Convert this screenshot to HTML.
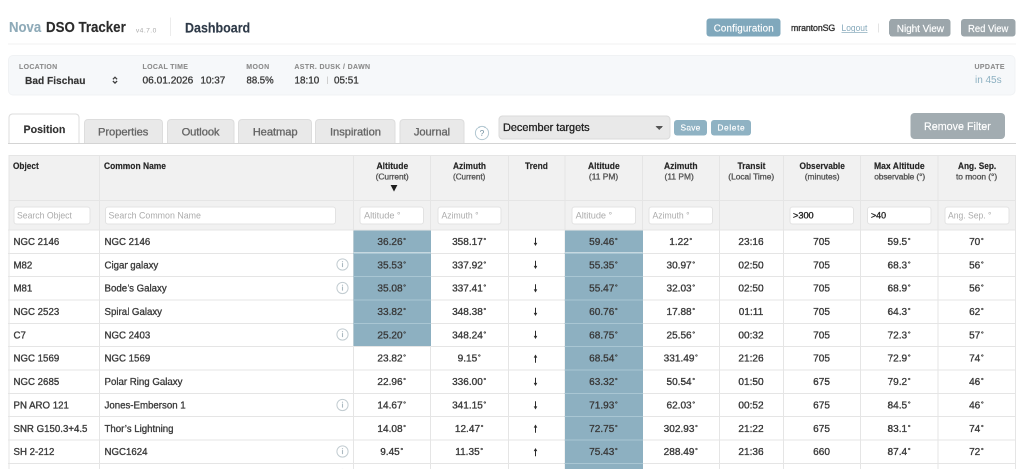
<!DOCTYPE html>
<html><head><meta charset="utf-8">
<style>
*{box-sizing:border-box;margin:0;padding:0}
html,body{width:1024px;height:469px;overflow:hidden;background:#fff;font-family:"Liberation Sans",sans-serif;color:#333}
.abs{position:absolute}
.t{position:absolute;white-space:nowrap;line-height:1}
</style></head><body>

<div style="position:absolute;left:0;top:0;width:2048px;height:938px;transform:scale(0.5);transform-origin:0 0;will-change:transform;background:#fff;overflow:hidden"><div style="position:absolute;left:0;top:0;width:1024px;height:469px;zoom:2">
<div class="t" style="left:8.75px;top:19.50px;font-size:14.66px;font-weight:bold;color:#8eaab8;transform:scaleX(0.8971);transform-origin:0.00px 0;-webkit-text-stroke:0.1px currentColor;">Nova</div>
<div class="t" style="left:46.00px;top:19.50px;font-size:14.66px;font-weight:bold;color:#2b2b2b;transform:scaleX(0.9062);transform-origin:0.00px 0;-webkit-text-stroke:0.15px currentColor;">DSO Tracker</div>
<div class="t" style="left:135.90px;top:27.00px;font-size:6.70px;color:#aaaaaa;letter-spacing:0.430px;">v4.7.0</div>
<div class="abs" style="left:170.00px;top:17.60px;width:1.00px;height:18.40px;background:#ececec"></div>
<div class="t" style="left:185.00px;top:21.00px;font-size:13.69px;font-weight:bold;color:#2e3a48;transform:scaleX(0.9116);transform-origin:0.00px 0;-webkit-text-stroke:0.15px currentColor;">Dashboard</div>
<div class="abs" style="left:8.00px;top:43.50px;width:1008.00px;height:1.00px;background:#f1f1f1"></div>
<div class="abs" style="left:706.70px;top:18.50px;width:73.80px;height:18.10px;background:#80a8bc;border-radius:3px"></div>
<div class="t" style="left:713.70px;top:23.50px;font-size:9.78px;color:#ffffff;letter-spacing:0.150px;-webkit-text-stroke:0.15px currentColor;">Configuration</div>
<div class="t" style="left:791.00px;top:24.00px;font-size:8.80px;color:#333;letter-spacing:-0.094px;-webkit-text-stroke:0.33px currentColor;">mrantonSG</div>
<div class="t" style="left:841.50px;top:23.50px;font-size:9.08px;color:#86a9bb;transform:scaleX(0.9314);transform-origin:0.00px 0;">Logout</div>
<div class="abs" style="left:841.50px;top:32.20px;width:25.80px;height:0.70px;background:#a9c2ce"></div>
<div class="abs" style="left:877.80px;top:23.30px;width:1.00px;height:9.00px;background:#e4e4e4"></div>
<div class="abs" style="left:889.10px;top:18.80px;width:61.40px;height:17.60px;background:#9ca6ab;border-radius:3px"></div>
<div class="t" style="left:896.80px;top:23.50px;font-size:10.06px;color:#ffffff;letter-spacing:-0.078px;-webkit-text-stroke:0.15px currentColor;">Night View</div>
<div class="abs" style="left:961.00px;top:18.80px;width:54.60px;height:17.60px;background:#9ca6ab;border-radius:3px"></div>
<div class="t" style="left:968.00px;top:23.50px;font-size:10.06px;color:#ffffff;transform:scaleX(0.9405);transform-origin:0.00px 0;-webkit-text-stroke:0.15px currentColor;">Red View</div>
<div class="abs" style="left:8.10px;top:55.00px;width:1007.40px;height:40.30px;background:#f6f8fa;border:1px solid #f0f2f4;border-radius:5px"></div>
<div class="t" style="left:19.00px;top:63.50px;font-size:6.98px;font-weight:bold;color:#8c8c8c;letter-spacing:0.314px;-webkit-text-stroke:0.1px currentColor;">LOCATION</div>
<div class="t" style="left:25.00px;top:75.50px;font-size:10.34px;font-weight:bold;color:#333;transform:scaleX(0.9829);transform-origin:0.00px 0;-webkit-text-stroke:0.15px currentColor;">Bad Fischau</div>
<svg class="abs" style="left:110px;top:74px" width="10" height="12" viewBox="0 0 10 12"><path d="M2.9 5.3 L5 3.2 L7.1 5.3 M2.9 7 L5 9.1 L7.1 7" fill="none" stroke="#3a3a3a" stroke-width="1.25"/></svg>
<div class="t" style="left:142.50px;top:63.50px;font-size:6.98px;font-weight:bold;color:#8c8c8c;letter-spacing:0.317px;-webkit-text-stroke:0.1px currentColor;">LOCAL TIME</div>
<div class="t" style="left:142.50px;top:75.00px;font-size:10.34px;color:#3a3a3a;transform:scaleX(0.9816);transform-origin:0.00px 0;-webkit-text-stroke:0.33px currentColor;">06.01.2026</div>
<div class="t" style="left:200.60px;top:75.00px;font-size:10.34px;color:#3a3a3a;transform:scaleX(0.9553);transform-origin:0.00px 0;-webkit-text-stroke:0.33px currentColor;">10:37</div>
<div class="t" style="left:246.30px;top:63.50px;font-size:6.98px;font-weight:bold;color:#8c8c8c;letter-spacing:0.367px;-webkit-text-stroke:0.1px currentColor;">MOON</div>
<div class="t" style="left:246.30px;top:75.00px;font-size:10.34px;color:#3a3a3a;transform:scaleX(0.9247);transform-origin:0.00px 0;-webkit-text-stroke:0.33px currentColor;">88.5%</div>
<div class="t" style="left:294.40px;top:63.50px;font-size:6.98px;font-weight:bold;color:#8c8c8c;letter-spacing:0.369px;-webkit-text-stroke:0.1px currentColor;">ASTR. DUSK / DAWN</div>
<div class="t" style="left:294.40px;top:75.00px;font-size:10.34px;color:#3a3a3a;transform:scaleX(0.9553);transform-origin:0.00px 0;-webkit-text-stroke:0.33px currentColor;">18:10</div>
<div class="abs" style="left:326.80px;top:76.50px;width:1.00px;height:7.50px;background:#cfcfcf"></div>
<div class="t" style="left:334.20px;top:75.00px;font-size:10.34px;color:#3a3a3a;transform:scaleX(0.9553);transform-origin:0.00px 0;-webkit-text-stroke:0.33px currentColor;">05:51</div>
<div class="t" style="left:974.50px;top:63.50px;font-size:6.98px;font-weight:bold;color:#8c8c8c;letter-spacing:0.370px;-webkit-text-stroke:0.1px currentColor;">UPDATE</div>
<div class="t" style="left:975.00px;top:74.50px;font-size:10.06px;color:#8cb0c1;letter-spacing:-0.040px;">in 45s</div>
<div class="abs" style="left:83.90px;top:119.10px;width:78.90px;height:23.90px;background:#e9e9e9;border:1px solid #dddddd;border-bottom:none;border-radius:4px 4px 0 0"></div>
<div class="t" style="left:98.00px;top:126.50px;font-size:11.17px;color:#666;letter-spacing:-0.056px;-webkit-text-stroke:0.33px currentColor;">Properties</div>
<div class="abs" style="left:167.00px;top:119.10px;width:67.40px;height:23.90px;background:#e9e9e9;border:1px solid #dddddd;border-bottom:none;border-radius:4px 4px 0 0"></div>
<div class="t" style="left:181.60px;top:126.50px;font-size:11.17px;color:#666;letter-spacing:-0.092px;-webkit-text-stroke:0.33px currentColor;">Outlook</div>
<div class="abs" style="left:238.00px;top:119.10px;width:74.00px;height:23.90px;background:#e9e9e9;border:1px solid #dddddd;border-bottom:none;border-radius:4px 4px 0 0"></div>
<div class="t" style="left:252.70px;top:126.50px;font-size:11.17px;color:#666;letter-spacing:-0.075px;-webkit-text-stroke:0.33px currentColor;">Heatmap</div>
<div class="abs" style="left:315.20px;top:119.10px;width:80.50px;height:23.90px;background:#e9e9e9;border:1px solid #dddddd;border-bottom:none;border-radius:4px 4px 0 0"></div>
<div class="t" style="left:330.00px;top:126.50px;font-size:11.17px;color:#666;letter-spacing:-0.055px;-webkit-text-stroke:0.33px currentColor;">Inspiration</div>
<div class="abs" style="left:399.40px;top:119.10px;width:65.10px;height:23.90px;background:#e9e9e9;border:1px solid #dddddd;border-bottom:none;border-radius:4px 4px 0 0"></div>
<div class="t" style="left:413.90px;top:126.50px;font-size:11.17px;color:#666;letter-spacing:-0.075px;-webkit-text-stroke:0.33px currentColor;">Journal</div>
<div class="abs" style="left:8.30px;top:113.30px;width:71.10px;height:30.70px;background:#fff;border:1px solid #dcdcdc;border-bottom:none;border-radius:4px 4px 0 0"></div>
<div class="t" style="left:23.30px;top:124.00px;font-size:10.89px;font-weight:bold;color:#333;transform:scaleX(0.9766);transform-origin:0.00px 0;-webkit-text-stroke:0.15px currentColor;">Position</div>
<div class="abs" style="left:8.00px;top:143.20px;width:1008.00px;height:1.00px;background:#d4d4d4"></div>
<svg class="abs" style="left:474px;top:125px" width="16" height="16" viewBox="0 0 16 16"><circle cx="8" cy="8" r="6.6" fill="none" stroke="#b2c7d1" stroke-width="1"/><text x="8" y="10.9" text-anchor="middle" font-size="8.4" font-family="Liberation Sans" fill="#6f8e9e">?</text></svg>
<div class="abs" style="left:498.70px;top:115.60px;width:172.00px;height:23.70px;background:#e9e9e9;border:1px solid #dadada;border-radius:4px"></div>
<div class="t" style="left:503.20px;top:122.00px;font-size:11.17px;color:#222;transform:scaleX(0.9763);transform-origin:0.00px 0;-webkit-text-stroke:0.33px currentColor;">December targets</div>
<svg class="abs" style="left:655px;top:125px" width="9" height="6" viewBox="0 0 9 6"><path d="M0.5 1 L8 1 L4.25 5 Z" fill="#555"/></svg>
<div class="abs" style="left:673.90px;top:120.00px;width:33.00px;height:15.60px;background:#8fb2c3;border-radius:3px"></div>
<div class="t" style="left:680.50px;top:124.00px;font-size:8.38px;color:#fff;letter-spacing:0.250px;-webkit-text-stroke:0.15px currentColor;">Save</div>
<div class="abs" style="left:710.80px;top:120.00px;width:40.40px;height:15.60px;background:#8fb2c3;border-radius:3px"></div>
<div class="t" style="left:717.40px;top:124.00px;font-size:8.38px;color:#fff;letter-spacing:0.610px;-webkit-text-stroke:0.15px currentColor;">Delete</div>
<div class="abs" style="left:910.30px;top:113.10px;width:94.60px;height:25.90px;background:#a2acb1;border-radius:4px"></div>
<div class="t" style="left:924.00px;top:121.00px;font-size:11.31px;color:#fff;transform:scaleX(0.9495);transform-origin:0.00px 0;-webkit-text-stroke:0.15px currentColor;">Remove Filter</div>
<div class="abs" style="left:8.30px;top:154.90px;width:1007.60px;height:74.50px;background:#f1f1f1"></div>
<div class="abs" style="left:8.30px;top:154.90px;width:1007.60px;height:1.00px;background:#e5e5e5"></div>
<div class="abs" style="left:8.30px;top:200.00px;width:1007.60px;height:1.00px;background:#e5e5e5"></div>
<div class="abs" style="left:8.00px;top:229.40px;width:1008.00px;height:1.00px;background:#e5e5e5"></div>
<div class="abs" style="left:8.00px;top:252.75px;width:1008.00px;height:1.00px;background:#e5e5e5"></div>
<div class="abs" style="left:8.00px;top:276.10px;width:1008.00px;height:1.00px;background:#e5e5e5"></div>
<div class="abs" style="left:8.00px;top:299.45px;width:1008.00px;height:1.00px;background:#e5e5e5"></div>
<div class="abs" style="left:8.00px;top:322.80px;width:1008.00px;height:1.00px;background:#e5e5e5"></div>
<div class="abs" style="left:8.00px;top:346.15px;width:1008.00px;height:1.00px;background:#e5e5e5"></div>
<div class="abs" style="left:8.00px;top:369.50px;width:1008.00px;height:1.00px;background:#e5e5e5"></div>
<div class="abs" style="left:8.00px;top:392.85px;width:1008.00px;height:1.00px;background:#e5e5e5"></div>
<div class="abs" style="left:8.00px;top:416.20px;width:1008.00px;height:1.00px;background:#e5e5e5"></div>
<div class="abs" style="left:8.00px;top:439.55px;width:1008.00px;height:1.00px;background:#e5e5e5"></div>
<div class="abs" style="left:8.00px;top:462.90px;width:1008.00px;height:1.00px;background:#e5e5e5"></div>
<div class="abs" style="left:8.30px;top:154.90px;width:1.00px;height:314.10px;background:#e5e5e5"></div>
<div class="abs" style="left:99.20px;top:154.90px;width:1.00px;height:314.10px;background:#e5e5e5"></div>
<div class="abs" style="left:352.90px;top:154.90px;width:1.00px;height:314.10px;background:#e5e5e5"></div>
<div class="abs" style="left:430.20px;top:154.90px;width:1.00px;height:314.10px;background:#e5e5e5"></div>
<div class="abs" style="left:507.80px;top:154.90px;width:1.00px;height:314.10px;background:#e5e5e5"></div>
<div class="abs" style="left:564.50px;top:154.90px;width:1.00px;height:314.10px;background:#e5e5e5"></div>
<div class="abs" style="left:642.10px;top:154.90px;width:1.00px;height:314.10px;background:#e5e5e5"></div>
<div class="abs" style="left:719.10px;top:154.90px;width:1.00px;height:314.10px;background:#e5e5e5"></div>
<div class="abs" style="left:782.90px;top:154.90px;width:1.00px;height:314.10px;background:#e5e5e5"></div>
<div class="abs" style="left:860.20px;top:154.90px;width:1.00px;height:314.10px;background:#e5e5e5"></div>
<div class="abs" style="left:937.60px;top:154.90px;width:1.00px;height:314.10px;background:#e5e5e5"></div>
<div class="abs" style="left:1014.90px;top:154.90px;width:1.00px;height:314.10px;background:#e5e5e5"></div>
<div class="abs" style="left:353.40px;top:230.40px;width:77.80px;height:22.35px;background:#8db0c1"></div>
<div class="abs" style="left:565.00px;top:230.40px;width:78.10px;height:22.35px;background:#8db0c1"></div>
<div class="abs" style="left:353.40px;top:253.75px;width:77.80px;height:22.35px;background:#8db0c1"></div>
<div class="abs" style="left:352.90px;top:252.75px;width:78.30px;height:1.00px;background:#a9c6d3"></div>
<div class="abs" style="left:565.00px;top:253.75px;width:78.10px;height:22.35px;background:#8db0c1"></div>
<div class="abs" style="left:564.50px;top:252.75px;width:78.60px;height:1.00px;background:#a9c6d3"></div>
<div class="abs" style="left:353.40px;top:277.10px;width:77.80px;height:22.35px;background:#8db0c1"></div>
<div class="abs" style="left:352.90px;top:276.10px;width:78.30px;height:1.00px;background:#a9c6d3"></div>
<div class="abs" style="left:565.00px;top:277.10px;width:78.10px;height:22.35px;background:#8db0c1"></div>
<div class="abs" style="left:564.50px;top:276.10px;width:78.60px;height:1.00px;background:#a9c6d3"></div>
<div class="abs" style="left:353.40px;top:300.45px;width:77.80px;height:22.35px;background:#8db0c1"></div>
<div class="abs" style="left:352.90px;top:299.45px;width:78.30px;height:1.00px;background:#a9c6d3"></div>
<div class="abs" style="left:565.00px;top:300.45px;width:78.10px;height:22.35px;background:#8db0c1"></div>
<div class="abs" style="left:564.50px;top:299.45px;width:78.60px;height:1.00px;background:#a9c6d3"></div>
<div class="abs" style="left:353.40px;top:323.80px;width:77.80px;height:22.35px;background:#8db0c1"></div>
<div class="abs" style="left:352.90px;top:322.80px;width:78.30px;height:1.00px;background:#a9c6d3"></div>
<div class="abs" style="left:565.00px;top:323.80px;width:78.10px;height:22.35px;background:#8db0c1"></div>
<div class="abs" style="left:564.50px;top:322.80px;width:78.60px;height:1.00px;background:#a9c6d3"></div>
<div class="abs" style="left:565.00px;top:347.15px;width:78.10px;height:22.35px;background:#8db0c1"></div>
<div class="abs" style="left:564.50px;top:346.15px;width:78.60px;height:1.00px;background:#a9c6d3"></div>
<div class="abs" style="left:565.00px;top:370.50px;width:78.10px;height:22.35px;background:#8db0c1"></div>
<div class="abs" style="left:564.50px;top:369.50px;width:78.60px;height:1.00px;background:#a9c6d3"></div>
<div class="abs" style="left:565.00px;top:393.85px;width:78.10px;height:22.35px;background:#8db0c1"></div>
<div class="abs" style="left:564.50px;top:392.85px;width:78.60px;height:1.00px;background:#a9c6d3"></div>
<div class="abs" style="left:565.00px;top:417.20px;width:78.10px;height:22.35px;background:#8db0c1"></div>
<div class="abs" style="left:564.50px;top:416.20px;width:78.60px;height:1.00px;background:#a9c6d3"></div>
<div class="abs" style="left:565.00px;top:440.55px;width:78.10px;height:22.35px;background:#8db0c1"></div>
<div class="abs" style="left:564.50px;top:439.55px;width:78.60px;height:1.00px;background:#a9c6d3"></div>
<div class="abs" style="left:565.00px;top:463.90px;width:78.10px;height:22.35px;background:#8db0c1"></div>
<div class="abs" style="left:564.50px;top:462.90px;width:78.60px;height:1.00px;background:#a9c6d3"></div>
<div class="t" style="left:13.00px;top:162.00px;font-size:8.80px;font-weight:bold;color:#262626;transform:scaleX(0.9394);transform-origin:0.00px 0;-webkit-text-stroke:0.15px currentColor;">Object</div>
<div class="t" style="left:104.20px;top:162.00px;font-size:8.80px;font-weight:bold;color:#262626;transform:scaleX(0.9611);transform-origin:0.00px 0;-webkit-text-stroke:0.15px currentColor;">Common Name</div>
<div class="t" style="left:376.30px;top:162.00px;font-size:8.80px;font-weight:bold;color:#262626;transform:scaleX(0.9677);transform-origin:0.00px 0;-webkit-text-stroke:0.15px currentColor;">Altitude</div>
<div class="t" style="left:375.60px;top:173.00px;font-size:8.38px;color:#555;letter-spacing:-0.050px;-webkit-text-stroke:0.33px currentColor;">(Current)</div>
<div class="t" style="left:453.00px;top:162.00px;font-size:8.80px;font-weight:bold;color:#262626;transform:scaleX(0.9507);transform-origin:0.00px 0;-webkit-text-stroke:0.15px currentColor;">Azimuth</div>
<div class="t" style="left:453.00px;top:173.00px;font-size:8.38px;color:#555;transform:scaleX(0.9641);transform-origin:0.00px 0;-webkit-text-stroke:0.33px currentColor;">(Current)</div>
<div class="t" style="left:525.20px;top:162.00px;font-size:8.80px;font-weight:bold;color:#262626;transform:scaleX(0.9538);transform-origin:0.00px 0;-webkit-text-stroke:0.15px currentColor;">Trend</div>
<div class="t" style="left:588.00px;top:162.00px;font-size:8.80px;font-weight:bold;color:#262626;transform:scaleX(0.9677);transform-origin:0.00px 0;-webkit-text-stroke:0.15px currentColor;">Altitude</div>
<div class="t" style="left:588.90px;top:173.00px;font-size:8.38px;color:#555;letter-spacing:0.025px;-webkit-text-stroke:0.33px currentColor;">(11 PM)</div>
<div class="t" style="left:664.00px;top:162.00px;font-size:8.80px;font-weight:bold;color:#262626;transform:scaleX(0.9681);transform-origin:0.00px 0;-webkit-text-stroke:0.15px currentColor;">Azimuth</div>
<div class="t" style="left:664.50px;top:173.00px;font-size:8.38px;color:#555;letter-spacing:0.025px;-webkit-text-stroke:0.33px currentColor;">(11 PM)</div>
<div class="t" style="left:737.40px;top:162.00px;font-size:8.80px;font-weight:bold;color:#262626;transform:scaleX(0.9686);transform-origin:0.00px 0;-webkit-text-stroke:0.15px currentColor;">Transit</div>
<div class="t" style="left:728.30px;top:173.00px;font-size:8.38px;color:#555;letter-spacing:-0.023px;-webkit-text-stroke:0.33px currentColor;">(Local Time)</div>
<div class="t" style="left:799.30px;top:162.00px;font-size:8.80px;font-weight:bold;color:#262626;transform:scaleX(0.9465);transform-origin:0.00px 0;-webkit-text-stroke:0.15px currentColor;">Observable</div>
<div class="t" style="left:804.70px;top:173.00px;font-size:8.38px;color:#555;-webkit-text-stroke:0.33px currentColor;">(minutes)</div>
<div class="t" style="left:874.20px;top:162.00px;font-size:8.80px;font-weight:bold;color:#262626;transform:scaleX(0.9749);transform-origin:0.00px 0;-webkit-text-stroke:0.15px currentColor;">Max Altitude</div>
<div class="t" style="left:874.20px;top:173.00px;font-size:8.38px;color:#555;letter-spacing:-0.096px;-webkit-text-stroke:0.33px currentColor;">observable (°)</div>
<div class="t" style="left:957.80px;top:162.00px;font-size:8.80px;font-weight:bold;color:#262626;transform:scaleX(0.9418);transform-origin:0.00px 0;-webkit-text-stroke:0.15px currentColor;">Ang. Sep.</div>
<div class="t" style="left:956.00px;top:173.00px;font-size:8.38px;color:#555;letter-spacing:-0.040px;-webkit-text-stroke:0.33px currentColor;">to moon (°)</div>
<svg class="abs" style="left:389px;top:184px" width="10" height="9" viewBox="0 0 10 9"><path d="M1.6 1 L8.4 1 L5 7.6 Z" fill="#1e1e1e"/></svg>
<div class="abs" style="left:13.60px;top:206.50px;width:77.00px;height:17.90px;background:#fff;border:1px solid #e2e2e2;border-radius:3px"></div>
<div class="t" style="left:17.20px;top:211.00px;font-size:9.22px;color:#ababab;transform:scaleX(0.9400);transform-origin:0.00px 0;">Search Object</div>
<div class="abs" style="left:104.80px;top:206.50px;width:231.30px;height:17.90px;background:#fff;border:1px solid #e2e2e2;border-radius:3px"></div>
<div class="t" style="left:108.40px;top:211.00px;font-size:9.22px;color:#ababab;transform:scaleX(0.9600);transform-origin:0.00px 0;">Search Common Name</div>
<div class="abs" style="left:359.70px;top:206.50px;width:64.50px;height:17.90px;background:#fff;border:1px solid #e2e2e2;border-radius:3px"></div>
<div class="t" style="left:364.00px;top:211.00px;font-size:9.22px;color:#ababab;letter-spacing:-0.044px;">Altitude °</div>
<div class="abs" style="left:437.50px;top:206.50px;width:64.00px;height:17.90px;background:#fff;border:1px solid #e2e2e2;border-radius:3px"></div>
<div class="t" style="left:441.50px;top:211.00px;font-size:9.22px;color:#ababab;transform:scaleX(0.9379);transform-origin:0.00px 0;">Azimuth °</div>
<div class="abs" style="left:571.60px;top:206.50px;width:64.20px;height:17.90px;background:#fff;border:1px solid #e2e2e2;border-radius:3px"></div>
<div class="t" style="left:575.60px;top:211.00px;font-size:9.22px;color:#ababab;letter-spacing:-0.044px;">Altitude °</div>
<div class="abs" style="left:648.50px;top:206.50px;width:64.70px;height:17.90px;background:#fff;border:1px solid #e2e2e2;border-radius:3px"></div>
<div class="t" style="left:652.50px;top:211.00px;font-size:9.22px;color:#ababab;transform:scaleX(0.9379);transform-origin:0.00px 0;">Azimuth °</div>
<div class="abs" style="left:789.60px;top:206.50px;width:64.40px;height:17.90px;background:#fff;border:1px solid #e2e2e2;border-radius:3px"></div>
<div class="t" style="left:793.00px;top:211.00px;font-size:9.22px;color:#1f1f1f;letter-spacing:-0.033px;-webkit-text-stroke:0.33px currentColor;">>300</div>
<div class="abs" style="left:867.00px;top:206.50px;width:64.40px;height:17.90px;background:#fff;border:1px solid #e2e2e2;border-radius:3px"></div>
<div class="t" style="left:870.80px;top:211.00px;font-size:9.22px;color:#1f1f1f;transform:scaleX(0.9615);transform-origin:0.00px 0;-webkit-text-stroke:0.33px currentColor;">>40</div>
<div class="abs" style="left:944.30px;top:206.50px;width:65.20px;height:17.90px;background:#fff;border:1px solid #e2e2e2;border-radius:3px"></div>
<div class="t" style="left:948.00px;top:211.00px;font-size:9.22px;color:#ababab;transform:scaleX(0.9303);transform-origin:0.00px 0;">Ang. Sep. °</div>
<div class="t" style="left:13.50px;top:236.50px;font-size:10.06px;color:#3a3a3a;transform:scaleX(0.9620);transform-origin:0.00px 0;-webkit-text-stroke:0.33px currentColor;">NGC 2146</div>
<div class="t" style="left:104.40px;top:236.50px;font-size:10.06px;color:#3a3a3a;transform:scaleX(0.9620);transform-origin:0.00px 0;-webkit-text-stroke:0.33px currentColor;">NGC 2146</div>
<div class="t" style="left:377.42px;top:236.50px;font-size:10.06px;color:#3a3a3a;-webkit-text-stroke:0.33px currentColor;">36.26<span style="font-size:72%;position:relative;top:-0.3em;margin-left:0.6px">°</span></div>
<div class="t" style="left:452.07px;top:236.50px;font-size:10.06px;color:#3a3a3a;-webkit-text-stroke:0.33px currentColor;">358.17<span style="font-size:72%;position:relative;top:-0.3em;margin-left:0.6px">°</span></div>
<svg class="abs" style="left:532.65px;top:236.80px" width="6" height="10" viewBox="0 0 6 10"><path d="M3 0.8 V7.6" stroke="#2a2a2a" stroke-width="1"/><path d="M1.2 5.9 L3 9 L4.8 5.9 Z" fill="#2a2a2a"/></svg>
<div class="t" style="left:589.17px;top:236.50px;font-size:10.06px;color:#3a3a3a;-webkit-text-stroke:0.33px currentColor;">59.46<span style="font-size:72%;position:relative;top:-0.3em;margin-left:0.6px">°</span></div>
<div class="t" style="left:669.25px;top:236.50px;font-size:10.06px;color:#3a3a3a;-webkit-text-stroke:0.33px currentColor;">1.22<span style="font-size:72%;position:relative;top:-0.3em;margin-left:0.6px">°</span></div>
<div class="t" style="left:738.42px;top:236.50px;font-size:10.06px;color:#3a3a3a;-webkit-text-stroke:0.33px currentColor;">23:16</div>
<div class="t" style="left:813.17px;top:236.50px;font-size:10.06px;color:#3a3a3a;-webkit-text-stroke:0.33px currentColor;">705</div>
<div class="t" style="left:887.55px;top:236.50px;font-size:10.06px;color:#3a3a3a;-webkit-text-stroke:0.33px currentColor;">59.5<span style="font-size:72%;position:relative;top:-0.3em;margin-left:0.6px">°</span></div>
<div class="t" style="left:969.10px;top:236.50px;font-size:10.06px;color:#3a3a3a;-webkit-text-stroke:0.33px currentColor;">70<span style="font-size:72%;position:relative;top:-0.3em;margin-left:0.6px">°</span></div>
<div class="t" style="left:13.50px;top:260.00px;font-size:10.06px;color:#3a3a3a;transform:scaleX(0.9620);transform-origin:0.00px 0;-webkit-text-stroke:0.33px currentColor;">M82</div>
<div class="t" style="left:104.40px;top:260.00px;font-size:10.06px;color:#3a3a3a;transform:scaleX(0.9620);transform-origin:0.00px 0;-webkit-text-stroke:0.33px currentColor;">Cigar galaxy</div>
<div class="t" style="left:377.42px;top:260.00px;font-size:10.06px;color:#3a3a3a;-webkit-text-stroke:0.33px currentColor;">35.53<span style="font-size:72%;position:relative;top:-0.3em;margin-left:0.6px">°</span></div>
<div class="t" style="left:452.07px;top:260.00px;font-size:10.06px;color:#3a3a3a;-webkit-text-stroke:0.33px currentColor;">337.92<span style="font-size:72%;position:relative;top:-0.3em;margin-left:0.6px">°</span></div>
<svg class="abs" style="left:532.65px;top:260.15px" width="6" height="10" viewBox="0 0 6 10"><path d="M3 0.8 V7.6" stroke="#2a2a2a" stroke-width="1"/><path d="M1.2 5.9 L3 9 L4.8 5.9 Z" fill="#2a2a2a"/></svg>
<div class="t" style="left:589.17px;top:260.00px;font-size:10.06px;color:#3a3a3a;-webkit-text-stroke:0.33px currentColor;">55.35<span style="font-size:72%;position:relative;top:-0.3em;margin-left:0.6px">°</span></div>
<div class="t" style="left:666.48px;top:260.00px;font-size:10.06px;color:#3a3a3a;-webkit-text-stroke:0.33px currentColor;">30.97<span style="font-size:72%;position:relative;top:-0.3em;margin-left:0.6px">°</span></div>
<div class="t" style="left:738.42px;top:260.00px;font-size:10.06px;color:#3a3a3a;-webkit-text-stroke:0.33px currentColor;">02:50</div>
<div class="t" style="left:813.17px;top:260.00px;font-size:10.06px;color:#3a3a3a;-webkit-text-stroke:0.33px currentColor;">705</div>
<div class="t" style="left:887.55px;top:260.00px;font-size:10.06px;color:#3a3a3a;-webkit-text-stroke:0.33px currentColor;">68.3<span style="font-size:72%;position:relative;top:-0.3em;margin-left:0.6px">°</span></div>
<div class="t" style="left:969.10px;top:260.00px;font-size:10.06px;color:#3a3a3a;-webkit-text-stroke:0.33px currentColor;">56<span style="font-size:72%;position:relative;top:-0.3em;margin-left:0.6px">°</span></div>
<svg class="abs" style="left:335.5px;top:257.65px" width="14" height="14" viewBox="0 0 14 14"><circle cx="7" cy="7" r="5.6" fill="none" stroke="#c2ccd1" stroke-width="1"/><path d="M7 5.6 V9.6" stroke="#aab8c0" stroke-width="1.1"/><circle cx="7" cy="4.2" r="0.6" fill="#aab8c0"/></svg>
<div class="t" style="left:13.50px;top:283.00px;font-size:10.06px;color:#3a3a3a;transform:scaleX(0.9620);transform-origin:0.00px 0;-webkit-text-stroke:0.33px currentColor;">M81</div>
<div class="t" style="left:104.40px;top:283.00px;font-size:10.06px;color:#3a3a3a;transform:scaleX(0.9620);transform-origin:0.00px 0;-webkit-text-stroke:0.33px currentColor;">Bode’s Galaxy</div>
<div class="t" style="left:377.42px;top:283.00px;font-size:10.06px;color:#3a3a3a;-webkit-text-stroke:0.33px currentColor;">35.08<span style="font-size:72%;position:relative;top:-0.3em;margin-left:0.6px">°</span></div>
<div class="t" style="left:452.07px;top:283.00px;font-size:10.06px;color:#3a3a3a;-webkit-text-stroke:0.33px currentColor;">337.41<span style="font-size:72%;position:relative;top:-0.3em;margin-left:0.6px">°</span></div>
<svg class="abs" style="left:532.65px;top:283.50px" width="6" height="10" viewBox="0 0 6 10"><path d="M3 0.8 V7.6" stroke="#2a2a2a" stroke-width="1"/><path d="M1.2 5.9 L3 9 L4.8 5.9 Z" fill="#2a2a2a"/></svg>
<div class="t" style="left:589.17px;top:283.00px;font-size:10.06px;color:#3a3a3a;-webkit-text-stroke:0.33px currentColor;">55.47<span style="font-size:72%;position:relative;top:-0.3em;margin-left:0.6px">°</span></div>
<div class="t" style="left:666.48px;top:283.00px;font-size:10.06px;color:#3a3a3a;-webkit-text-stroke:0.33px currentColor;">32.03<span style="font-size:72%;position:relative;top:-0.3em;margin-left:0.6px">°</span></div>
<div class="t" style="left:738.42px;top:283.00px;font-size:10.06px;color:#3a3a3a;-webkit-text-stroke:0.33px currentColor;">02:50</div>
<div class="t" style="left:813.17px;top:283.00px;font-size:10.06px;color:#3a3a3a;-webkit-text-stroke:0.33px currentColor;">705</div>
<div class="t" style="left:887.55px;top:283.00px;font-size:10.06px;color:#3a3a3a;-webkit-text-stroke:0.33px currentColor;">68.9<span style="font-size:72%;position:relative;top:-0.3em;margin-left:0.6px">°</span></div>
<div class="t" style="left:969.10px;top:283.00px;font-size:10.06px;color:#3a3a3a;-webkit-text-stroke:0.33px currentColor;">56<span style="font-size:72%;position:relative;top:-0.3em;margin-left:0.6px">°</span></div>
<svg class="abs" style="left:335.5px;top:281.00px" width="14" height="14" viewBox="0 0 14 14"><circle cx="7" cy="7" r="5.6" fill="none" stroke="#c2ccd1" stroke-width="1"/><path d="M7 5.6 V9.6" stroke="#aab8c0" stroke-width="1.1"/><circle cx="7" cy="4.2" r="0.6" fill="#aab8c0"/></svg>
<div class="t" style="left:13.50px;top:306.50px;font-size:10.06px;color:#3a3a3a;transform:scaleX(0.9620);transform-origin:0.00px 0;-webkit-text-stroke:0.33px currentColor;">NGC 2523</div>
<div class="t" style="left:104.40px;top:306.50px;font-size:10.06px;color:#3a3a3a;transform:scaleX(0.9620);transform-origin:0.00px 0;-webkit-text-stroke:0.33px currentColor;">Spiral Galaxy</div>
<div class="t" style="left:377.42px;top:306.50px;font-size:10.06px;color:#3a3a3a;-webkit-text-stroke:0.33px currentColor;">33.82<span style="font-size:72%;position:relative;top:-0.3em;margin-left:0.6px">°</span></div>
<div class="t" style="left:452.07px;top:306.50px;font-size:10.06px;color:#3a3a3a;-webkit-text-stroke:0.33px currentColor;">348.38<span style="font-size:72%;position:relative;top:-0.3em;margin-left:0.6px">°</span></div>
<svg class="abs" style="left:532.65px;top:306.85px" width="6" height="10" viewBox="0 0 6 10"><path d="M3 0.8 V7.6" stroke="#2a2a2a" stroke-width="1"/><path d="M1.2 5.9 L3 9 L4.8 5.9 Z" fill="#2a2a2a"/></svg>
<div class="t" style="left:589.17px;top:306.50px;font-size:10.06px;color:#3a3a3a;-webkit-text-stroke:0.33px currentColor;">60.76<span style="font-size:72%;position:relative;top:-0.3em;margin-left:0.6px">°</span></div>
<div class="t" style="left:666.48px;top:306.50px;font-size:10.06px;color:#3a3a3a;-webkit-text-stroke:0.33px currentColor;">17.88<span style="font-size:72%;position:relative;top:-0.3em;margin-left:0.6px">°</span></div>
<div class="t" style="left:738.80px;top:306.50px;font-size:10.06px;color:#3a3a3a;-webkit-text-stroke:0.33px currentColor;">01:11</div>
<div class="t" style="left:813.17px;top:306.50px;font-size:10.06px;color:#3a3a3a;-webkit-text-stroke:0.33px currentColor;">705</div>
<div class="t" style="left:887.55px;top:306.50px;font-size:10.06px;color:#3a3a3a;-webkit-text-stroke:0.33px currentColor;">64.3<span style="font-size:72%;position:relative;top:-0.3em;margin-left:0.6px">°</span></div>
<div class="t" style="left:969.10px;top:306.50px;font-size:10.06px;color:#3a3a3a;-webkit-text-stroke:0.33px currentColor;">62<span style="font-size:72%;position:relative;top:-0.3em;margin-left:0.6px">°</span></div>
<div class="t" style="left:13.50px;top:330.00px;font-size:10.06px;color:#3a3a3a;transform:scaleX(0.9620);transform-origin:0.00px 0;-webkit-text-stroke:0.33px currentColor;">C7</div>
<div class="t" style="left:104.40px;top:330.00px;font-size:10.06px;color:#3a3a3a;transform:scaleX(0.9620);transform-origin:0.00px 0;-webkit-text-stroke:0.33px currentColor;">NGC 2403</div>
<div class="t" style="left:377.42px;top:330.00px;font-size:10.06px;color:#3a3a3a;-webkit-text-stroke:0.33px currentColor;">25.20<span style="font-size:72%;position:relative;top:-0.3em;margin-left:0.6px">°</span></div>
<div class="t" style="left:452.07px;top:330.00px;font-size:10.06px;color:#3a3a3a;-webkit-text-stroke:0.33px currentColor;">348.24<span style="font-size:72%;position:relative;top:-0.3em;margin-left:0.6px">°</span></div>
<svg class="abs" style="left:532.65px;top:330.20px" width="6" height="10" viewBox="0 0 6 10"><path d="M3 0.8 V7.6" stroke="#2a2a2a" stroke-width="1"/><path d="M1.2 5.9 L3 9 L4.8 5.9 Z" fill="#2a2a2a"/></svg>
<div class="t" style="left:589.17px;top:330.00px;font-size:10.06px;color:#3a3a3a;-webkit-text-stroke:0.33px currentColor;">68.75<span style="font-size:72%;position:relative;top:-0.3em;margin-left:0.6px">°</span></div>
<div class="t" style="left:666.48px;top:330.00px;font-size:10.06px;color:#3a3a3a;-webkit-text-stroke:0.33px currentColor;">25.56<span style="font-size:72%;position:relative;top:-0.3em;margin-left:0.6px">°</span></div>
<div class="t" style="left:738.42px;top:330.00px;font-size:10.06px;color:#3a3a3a;-webkit-text-stroke:0.33px currentColor;">00:32</div>
<div class="t" style="left:813.17px;top:330.00px;font-size:10.06px;color:#3a3a3a;-webkit-text-stroke:0.33px currentColor;">705</div>
<div class="t" style="left:887.55px;top:330.00px;font-size:10.06px;color:#3a3a3a;-webkit-text-stroke:0.33px currentColor;">72.3<span style="font-size:72%;position:relative;top:-0.3em;margin-left:0.6px">°</span></div>
<div class="t" style="left:969.10px;top:330.00px;font-size:10.06px;color:#3a3a3a;-webkit-text-stroke:0.33px currentColor;">57<span style="font-size:72%;position:relative;top:-0.3em;margin-left:0.6px">°</span></div>
<svg class="abs" style="left:335.5px;top:327.70px" width="14" height="14" viewBox="0 0 14 14"><circle cx="7" cy="7" r="5.6" fill="none" stroke="#c2ccd1" stroke-width="1"/><path d="M7 5.6 V9.6" stroke="#aab8c0" stroke-width="1.1"/><circle cx="7" cy="4.2" r="0.6" fill="#aab8c0"/></svg>
<div class="t" style="left:13.50px;top:353.00px;font-size:10.06px;color:#3a3a3a;transform:scaleX(0.9620);transform-origin:0.00px 0;-webkit-text-stroke:0.33px currentColor;">NGC 1569</div>
<div class="t" style="left:104.40px;top:353.00px;font-size:10.06px;color:#3a3a3a;transform:scaleX(0.9620);transform-origin:0.00px 0;-webkit-text-stroke:0.33px currentColor;">NGC 1569</div>
<div class="t" style="left:377.42px;top:353.00px;font-size:10.06px;color:#3a3a3a;-webkit-text-stroke:0.33px currentColor;">23.82<span style="font-size:72%;position:relative;top:-0.3em;margin-left:0.6px">°</span></div>
<div class="t" style="left:457.65px;top:353.00px;font-size:10.06px;color:#3a3a3a;-webkit-text-stroke:0.33px currentColor;">9.15<span style="font-size:72%;position:relative;top:-0.3em;margin-left:0.6px">°</span></div>
<svg class="abs" style="left:532.65px;top:353.55px" width="6" height="10" viewBox="0 0 6 10"><path d="M3 2.4 V9.2" stroke="#2a2a2a" stroke-width="1"/><path d="M1.2 4.1 L3 1 L4.8 4.1 Z" fill="#2a2a2a"/></svg>
<div class="t" style="left:589.17px;top:353.00px;font-size:10.06px;color:#3a3a3a;-webkit-text-stroke:0.33px currentColor;">68.54<span style="font-size:72%;position:relative;top:-0.3em;margin-left:0.6px">°</span></div>
<div class="t" style="left:663.68px;top:353.00px;font-size:10.06px;color:#3a3a3a;-webkit-text-stroke:0.33px currentColor;">331.49<span style="font-size:72%;position:relative;top:-0.3em;margin-left:0.6px">°</span></div>
<div class="t" style="left:738.42px;top:353.00px;font-size:10.06px;color:#3a3a3a;-webkit-text-stroke:0.33px currentColor;">21:26</div>
<div class="t" style="left:813.17px;top:353.00px;font-size:10.06px;color:#3a3a3a;-webkit-text-stroke:0.33px currentColor;">705</div>
<div class="t" style="left:887.55px;top:353.00px;font-size:10.06px;color:#3a3a3a;-webkit-text-stroke:0.33px currentColor;">72.9<span style="font-size:72%;position:relative;top:-0.3em;margin-left:0.6px">°</span></div>
<div class="t" style="left:969.10px;top:353.00px;font-size:10.06px;color:#3a3a3a;-webkit-text-stroke:0.33px currentColor;">74<span style="font-size:72%;position:relative;top:-0.3em;margin-left:0.6px">°</span></div>
<div class="t" style="left:13.50px;top:376.50px;font-size:10.06px;color:#3a3a3a;transform:scaleX(0.9620);transform-origin:0.00px 0;-webkit-text-stroke:0.33px currentColor;">NGC 2685</div>
<div class="t" style="left:104.40px;top:376.50px;font-size:10.06px;color:#3a3a3a;transform:scaleX(0.9620);transform-origin:0.00px 0;-webkit-text-stroke:0.33px currentColor;">Polar Ring Galaxy</div>
<div class="t" style="left:377.42px;top:376.50px;font-size:10.06px;color:#3a3a3a;-webkit-text-stroke:0.33px currentColor;">22.96<span style="font-size:72%;position:relative;top:-0.3em;margin-left:0.6px">°</span></div>
<div class="t" style="left:452.07px;top:376.50px;font-size:10.06px;color:#3a3a3a;-webkit-text-stroke:0.33px currentColor;">336.00<span style="font-size:72%;position:relative;top:-0.3em;margin-left:0.6px">°</span></div>
<svg class="abs" style="left:532.65px;top:376.90px" width="6" height="10" viewBox="0 0 6 10"><path d="M3 0.8 V7.6" stroke="#2a2a2a" stroke-width="1"/><path d="M1.2 5.9 L3 9 L4.8 5.9 Z" fill="#2a2a2a"/></svg>
<div class="t" style="left:589.17px;top:376.50px;font-size:10.06px;color:#3a3a3a;-webkit-text-stroke:0.33px currentColor;">63.32<span style="font-size:72%;position:relative;top:-0.3em;margin-left:0.6px">°</span></div>
<div class="t" style="left:666.48px;top:376.50px;font-size:10.06px;color:#3a3a3a;-webkit-text-stroke:0.33px currentColor;">50.54<span style="font-size:72%;position:relative;top:-0.3em;margin-left:0.6px">°</span></div>
<div class="t" style="left:738.42px;top:376.50px;font-size:10.06px;color:#3a3a3a;-webkit-text-stroke:0.33px currentColor;">01:50</div>
<div class="t" style="left:813.17px;top:376.50px;font-size:10.06px;color:#3a3a3a;-webkit-text-stroke:0.33px currentColor;">675</div>
<div class="t" style="left:887.55px;top:376.50px;font-size:10.06px;color:#3a3a3a;-webkit-text-stroke:0.33px currentColor;">79.2<span style="font-size:72%;position:relative;top:-0.3em;margin-left:0.6px">°</span></div>
<div class="t" style="left:969.10px;top:376.50px;font-size:10.06px;color:#3a3a3a;-webkit-text-stroke:0.33px currentColor;">46<span style="font-size:72%;position:relative;top:-0.3em;margin-left:0.6px">°</span></div>
<div class="t" style="left:13.50px;top:400.00px;font-size:10.06px;color:#3a3a3a;transform:scaleX(0.9620);transform-origin:0.00px 0;-webkit-text-stroke:0.33px currentColor;">PN ARO 121</div>
<div class="t" style="left:104.40px;top:400.00px;font-size:10.06px;color:#3a3a3a;transform:scaleX(0.9620);transform-origin:0.00px 0;-webkit-text-stroke:0.33px currentColor;">Jones-Emberson 1</div>
<div class="t" style="left:377.42px;top:400.00px;font-size:10.06px;color:#3a3a3a;-webkit-text-stroke:0.33px currentColor;">14.67<span style="font-size:72%;position:relative;top:-0.3em;margin-left:0.6px">°</span></div>
<div class="t" style="left:452.07px;top:400.00px;font-size:10.06px;color:#3a3a3a;-webkit-text-stroke:0.33px currentColor;">341.15<span style="font-size:72%;position:relative;top:-0.3em;margin-left:0.6px">°</span></div>
<svg class="abs" style="left:532.65px;top:400.25px" width="6" height="10" viewBox="0 0 6 10"><path d="M3 0.8 V7.6" stroke="#2a2a2a" stroke-width="1"/><path d="M1.2 5.9 L3 9 L4.8 5.9 Z" fill="#2a2a2a"/></svg>
<div class="t" style="left:589.17px;top:400.00px;font-size:10.06px;color:#3a3a3a;-webkit-text-stroke:0.33px currentColor;">71.93<span style="font-size:72%;position:relative;top:-0.3em;margin-left:0.6px">°</span></div>
<div class="t" style="left:666.48px;top:400.00px;font-size:10.06px;color:#3a3a3a;-webkit-text-stroke:0.33px currentColor;">62.03<span style="font-size:72%;position:relative;top:-0.3em;margin-left:0.6px">°</span></div>
<div class="t" style="left:738.42px;top:400.00px;font-size:10.06px;color:#3a3a3a;-webkit-text-stroke:0.33px currentColor;">00:52</div>
<div class="t" style="left:813.17px;top:400.00px;font-size:10.06px;color:#3a3a3a;-webkit-text-stroke:0.33px currentColor;">675</div>
<div class="t" style="left:887.55px;top:400.00px;font-size:10.06px;color:#3a3a3a;-webkit-text-stroke:0.33px currentColor;">84.5<span style="font-size:72%;position:relative;top:-0.3em;margin-left:0.6px">°</span></div>
<div class="t" style="left:969.10px;top:400.00px;font-size:10.06px;color:#3a3a3a;-webkit-text-stroke:0.33px currentColor;">46<span style="font-size:72%;position:relative;top:-0.3em;margin-left:0.6px">°</span></div>
<svg class="abs" style="left:335.5px;top:397.75px" width="14" height="14" viewBox="0 0 14 14"><circle cx="7" cy="7" r="5.6" fill="none" stroke="#c2ccd1" stroke-width="1"/><path d="M7 5.6 V9.6" stroke="#aab8c0" stroke-width="1.1"/><circle cx="7" cy="4.2" r="0.6" fill="#aab8c0"/></svg>
<div class="t" style="left:13.50px;top:423.50px;font-size:10.06px;color:#3a3a3a;transform:scaleX(0.9620);transform-origin:0.00px 0;-webkit-text-stroke:0.33px currentColor;">SNR G150.3+4.5</div>
<div class="t" style="left:104.40px;top:423.50px;font-size:10.06px;color:#3a3a3a;transform:scaleX(0.9620);transform-origin:0.00px 0;-webkit-text-stroke:0.33px currentColor;">Thor’s Lightning</div>
<div class="t" style="left:377.42px;top:423.50px;font-size:10.06px;color:#3a3a3a;-webkit-text-stroke:0.33px currentColor;">14.08<span style="font-size:72%;position:relative;top:-0.3em;margin-left:0.6px">°</span></div>
<div class="t" style="left:454.88px;top:423.50px;font-size:10.06px;color:#3a3a3a;-webkit-text-stroke:0.33px currentColor;">12.47<span style="font-size:72%;position:relative;top:-0.3em;margin-left:0.6px">°</span></div>
<svg class="abs" style="left:532.65px;top:423.60px" width="6" height="10" viewBox="0 0 6 10"><path d="M3 2.4 V9.2" stroke="#2a2a2a" stroke-width="1"/><path d="M1.2 4.1 L3 1 L4.8 4.1 Z" fill="#2a2a2a"/></svg>
<div class="t" style="left:589.17px;top:423.50px;font-size:10.06px;color:#3a3a3a;-webkit-text-stroke:0.33px currentColor;">72.75<span style="font-size:72%;position:relative;top:-0.3em;margin-left:0.6px">°</span></div>
<div class="t" style="left:663.68px;top:423.50px;font-size:10.06px;color:#3a3a3a;-webkit-text-stroke:0.33px currentColor;">302.93<span style="font-size:72%;position:relative;top:-0.3em;margin-left:0.6px">°</span></div>
<div class="t" style="left:738.42px;top:423.50px;font-size:10.06px;color:#3a3a3a;-webkit-text-stroke:0.33px currentColor;">21:22</div>
<div class="t" style="left:813.17px;top:423.50px;font-size:10.06px;color:#3a3a3a;-webkit-text-stroke:0.33px currentColor;">675</div>
<div class="t" style="left:887.55px;top:423.50px;font-size:10.06px;color:#3a3a3a;-webkit-text-stroke:0.33px currentColor;">83.1<span style="font-size:72%;position:relative;top:-0.3em;margin-left:0.6px">°</span></div>
<div class="t" style="left:969.10px;top:423.50px;font-size:10.06px;color:#3a3a3a;-webkit-text-stroke:0.33px currentColor;">74<span style="font-size:72%;position:relative;top:-0.3em;margin-left:0.6px">°</span></div>
<div class="t" style="left:13.50px;top:446.50px;font-size:10.06px;color:#3a3a3a;transform:scaleX(0.9620);transform-origin:0.00px 0;-webkit-text-stroke:0.33px currentColor;">SH 2-212</div>
<div class="t" style="left:104.40px;top:446.50px;font-size:10.06px;color:#3a3a3a;transform:scaleX(0.9620);transform-origin:0.00px 0;-webkit-text-stroke:0.33px currentColor;">NGC1624</div>
<div class="t" style="left:380.20px;top:446.50px;font-size:10.06px;color:#3a3a3a;-webkit-text-stroke:0.33px currentColor;">9.45<span style="font-size:72%;position:relative;top:-0.3em;margin-left:0.6px">°</span></div>
<div class="t" style="left:455.25px;top:446.50px;font-size:10.06px;color:#3a3a3a;-webkit-text-stroke:0.33px currentColor;">11.35<span style="font-size:72%;position:relative;top:-0.3em;margin-left:0.6px">°</span></div>
<svg class="abs" style="left:532.65px;top:446.95px" width="6" height="10" viewBox="0 0 6 10"><path d="M3 2.4 V9.2" stroke="#2a2a2a" stroke-width="1"/><path d="M1.2 4.1 L3 1 L4.8 4.1 Z" fill="#2a2a2a"/></svg>
<div class="t" style="left:589.17px;top:446.50px;font-size:10.06px;color:#3a3a3a;-webkit-text-stroke:0.33px currentColor;">75.43<span style="font-size:72%;position:relative;top:-0.3em;margin-left:0.6px">°</span></div>
<div class="t" style="left:663.68px;top:446.50px;font-size:10.06px;color:#3a3a3a;-webkit-text-stroke:0.33px currentColor;">288.49<span style="font-size:72%;position:relative;top:-0.3em;margin-left:0.6px">°</span></div>
<div class="t" style="left:738.42px;top:446.50px;font-size:10.06px;color:#3a3a3a;-webkit-text-stroke:0.33px currentColor;">21:36</div>
<div class="t" style="left:813.17px;top:446.50px;font-size:10.06px;color:#3a3a3a;-webkit-text-stroke:0.33px currentColor;">660</div>
<div class="t" style="left:887.55px;top:446.50px;font-size:10.06px;color:#3a3a3a;-webkit-text-stroke:0.33px currentColor;">87.4<span style="font-size:72%;position:relative;top:-0.3em;margin-left:0.6px">°</span></div>
<div class="t" style="left:969.10px;top:446.50px;font-size:10.06px;color:#3a3a3a;-webkit-text-stroke:0.33px currentColor;">72<span style="font-size:72%;position:relative;top:-0.3em;margin-left:0.6px">°</span></div>
<svg class="abs" style="left:335.5px;top:444.45px" width="14" height="14" viewBox="0 0 14 14"><circle cx="7" cy="7" r="5.6" fill="none" stroke="#c2ccd1" stroke-width="1"/><path d="M7 5.6 V9.6" stroke="#aab8c0" stroke-width="1.1"/><circle cx="7" cy="4.2" r="0.6" fill="#aab8c0"/></svg>
<svg class="abs" style="left:335.5px;top:467.80px" width="14" height="14" viewBox="0 0 14 14"><circle cx="7" cy="7" r="5.6" fill="none" stroke="#c2ccd1" stroke-width="1"/><path d="M7 5.6 V9.6" stroke="#aab8c0" stroke-width="1.1"/><circle cx="7" cy="4.2" r="0.6" fill="#aab8c0"/></svg>
</div></div></body></html>
